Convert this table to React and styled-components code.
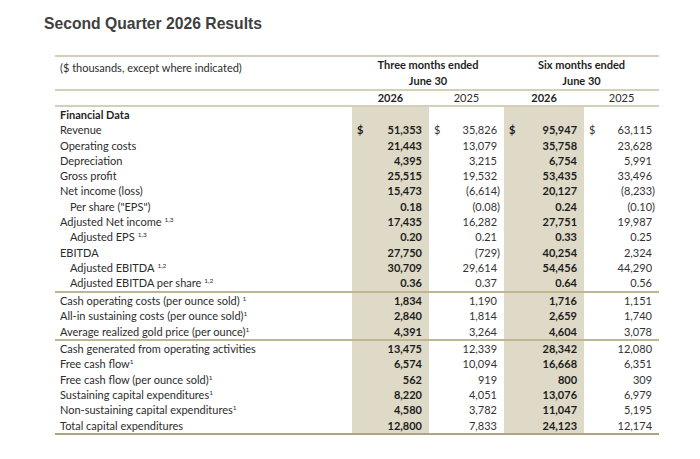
import React from "react";
import styled, { createGlobalStyle } from "styled-components";

const GlobalStyle = createGlobalStyle`
  html, body { margin: 0; padding: 0; background: #ffffff; }
  body { font-family: "Lato", "Liberation Sans", sans-serif; }
`;

const Page = styled.div`
  width: 700px;
  height: 459px;
  box-sizing: border-box;
  padding: 15px 0 0 44px;
  overflow: hidden;
`;

const Title = styled.h1`
  margin: 0 0 22px 0;
  font-family: "Liberation Sans", Arial, sans-serif;
  font-weight: 700;
  font-size: 15.7px;
  line-height: 18px;
  color: #404040;
`;

const Table = styled.table`
  margin-left: 11px;
  border-collapse: collapse;
  table-layout: fixed;
  width: 604px;
  font-family: "Lato", "Liberation Sans", sans-serif;
  font-size: 11px;
  color: #2c2c2c;
  border-top: 2px solid #d3cfb8;
  border-bottom: 2px solid #ada57c;
`;

const HeadRow = styled.tr`
  border-bottom: 2px solid #d3cfb8;
`;

const UnitsCell = styled.th`
  text-align: left;
  vertical-align: top;
  font-weight: 400;
  padding: 4px 0 0 5px;
  height: 28px;
  color: #2c2c2c;
`;

const PeriodCell = styled.th`
  text-align: center;
  font-weight: 700;
  line-height: 16px;
  padding: 0;
  color: #1f1f1f;
`;

const YearCell = styled.th`
  text-align: center;
  font-weight: ${(p) => (p.$bold ? 700 : 400)};
  color: ${(p) => (p.$bold ? "#1f1f1f" : "#2c2c2c")};
  height: 14px;
  line-height: 14px;
  padding: 0;
`;

const BodyRow = styled.tr`
  border-top: ${(p) => (p.$rule ? "2px solid #bdb68f" : "none")};
`;

const LabelCell = styled.td`
  padding: 0 0 0 ${(p) => (p.$indent ? 15 : 5)}px;
  height: ${(p) => p.$h}px;
  line-height: ${(p) => p.$h}px;
  font-weight: ${(p) => (p.$bold ? 700 : 400)};
  color: ${(p) => (p.$bold ? "#1f1f1f" : "#2c2c2c")};
  white-space: nowrap;
`;

const Sup = styled.sup`
  font-size: 6.5px;
  line-height: 0;
  vertical-align: 4px;
  margin-left: ${(p) => (p.$gap ? 3 : 0)}px;
`;

const ValueCell = styled.td`
  padding: 0 7px 0 5px;
  height: ${(p) => p.$h}px;
  background: ${(p) => (p.$shaded ? "#dedac7" : "transparent")};
  font-weight: ${(p) => (p.$shaded ? 700 : 400)};
  color: ${(p) => (p.$shaded ? "#1c1c1c" : "#333333")};
`;

const ValueInner = styled.div`
  display: flex;
  justify-content: space-between;
  align-items: center;
  height: ${(p) => p.$h}px;
  line-height: ${(p) => p.$h}px;
`;

const Num = styled.span`
  margin-left: auto;
  margin-right: ${(p) => (p.$neg ? -3 : 0)}px;
`;

const sections = [
  {
    h: 15.3,
    rule: false,
    rows: [
      { label: "Financial Data", bold: true, values: null },
      { label: "Revenue", dollar: true, values: ["51,353", "35,826", "95,947", "63,115"] },
      { label: "Operating costs", values: ["21,443", "13,079", "35,758", "23,628"] },
      { label: "Depreciation", values: ["4,395", "3,215", "6,754", "5,991"] },
      { label: "Gross profit", values: ["25,515", "19,532", "53,435", "33,496"] },
      { label: "Net income (loss)", values: ["15,473", "(6,614)", "20,127", "(8,233)"] },
      { label: 'Per share ("EPS")', indent: true, values: ["0.18", "(0.08)", "0.24", "(0.10)"] },
      { label: "Adjusted Net income", sup: "1,3", gap: true, values: ["17,435", "16,282", "27,751", "19,987"] },
      { label: "Adjusted EPS", sup: "1,3", gap: true, indent: true, values: ["0.20", "0.21", "0.33", "0.25"] },
      { label: "EBITDA", values: ["27,750", "(729)", "40,254", "2,324"] },
      { label: "Adjusted EBITDA", sup: "1,2", gap: true, indent: true, values: ["30,709", "29,614", "54,456", "44,290"] },
      { label: "Adjusted EBITDA per share", sup: "1,2", gap: true, indent: true, values: ["0.36", "0.37", "0.64", "0.56"] },
    ],
  },
  {
    h: 15.5,
    rule: true,
    rows: [
      { label: "Cash operating costs (per ounce sold)", sup: "1", gap: true, values: ["1,834", "1,190", "1,716", "1,151"] },
      { label: "All-in sustaining costs (per ounce sold)", sup: "1", values: ["2,840", "1,814", "2,659", "1,740"] },
      { label: "Average realized gold price (per ounce)", sup: "1", values: ["4,391", "3,264", "4,604", "3,078"] },
    ],
  },
  {
    h: 15.3,
    rule: true,
    rows: [
      { label: "Cash generated from operating activities", values: ["13,475", "12,339", "28,342", "12,080"] },
      { label: "Free cash flow", sup: "1", values: ["6,574", "10,094", "16,668", "6,351"] },
      { label: "Free cash flow (per ounce sold)", sup: "1", values: ["562", "919", "800", "309"] },
      { label: "Sustaining capital expenditures", sup: "1", values: ["8,220", "4,051", "13,076", "6,979"] },
      { label: "Non-sustaining capital expenditures", sup: "1", values: ["4,580", "3,782", "11,047", "5,195"] },
      { label: "Total capital expenditures", values: ["12,800", "7,833", "24,123", "12,174"] },
    ],
  },
];

function Row({ row, h, rule }) {
  const cols = row.values || ["", "", "", ""];
  return (
    <BodyRow $rule={rule}>
      <LabelCell $h={h} $indent={row.indent} $bold={row.bold}>
        {row.label}
        {row.sup && <Sup $gap={row.gap}>{row.sup}</Sup>}
      </LabelCell>
      {cols.map((v, i) => (
        <ValueCell key={i} $h={h} $shaded={i % 2 === 0}>
          <ValueInner $h={h}>
            {row.dollar && <span>$</span>}
            <Num $neg={v.startsWith("(")}>{v}</Num>
          </ValueInner>
        </ValueCell>
      ))}
    </BodyRow>
  );
}

export default function App() {
  return (
    <>
      <GlobalStyle />
      <Page>
        <Title>Second Quarter 2026 Results</Title>
        <Table>
          <colgroup>
            <col style={{ width: 297 }} />
            <col style={{ width: 77 }} />
            <col style={{ width: 75 }} />
            <col style={{ width: 80 }} />
            <col style={{ width: 75 }} />
          </colgroup>
          <thead>
            <HeadRow>
              <UnitsCell>($ thousands, except where indicated)</UnitsCell>
              <PeriodCell colSpan={2}>
                Three months ended
                <br />
                June 30
              </PeriodCell>
              <PeriodCell colSpan={2}>
                Six months ended
                <br />
                June 30
              </PeriodCell>
            </HeadRow>
            <HeadRow>
              <th />
              <YearCell $bold>2026</YearCell>
              <YearCell>2025</YearCell>
              <YearCell $bold>2026</YearCell>
              <YearCell>2025</YearCell>
            </HeadRow>
          </thead>
          <tbody>
            {sections.map((s, si) =>
              s.rows.map((r, ri) => (
                <Row key={`${si}-${ri}`} row={r} h={s.h} rule={s.rule && ri === 0} />
              ))
            )}
          </tbody>
        </Table>
      </Page>
    </>
  );
}
